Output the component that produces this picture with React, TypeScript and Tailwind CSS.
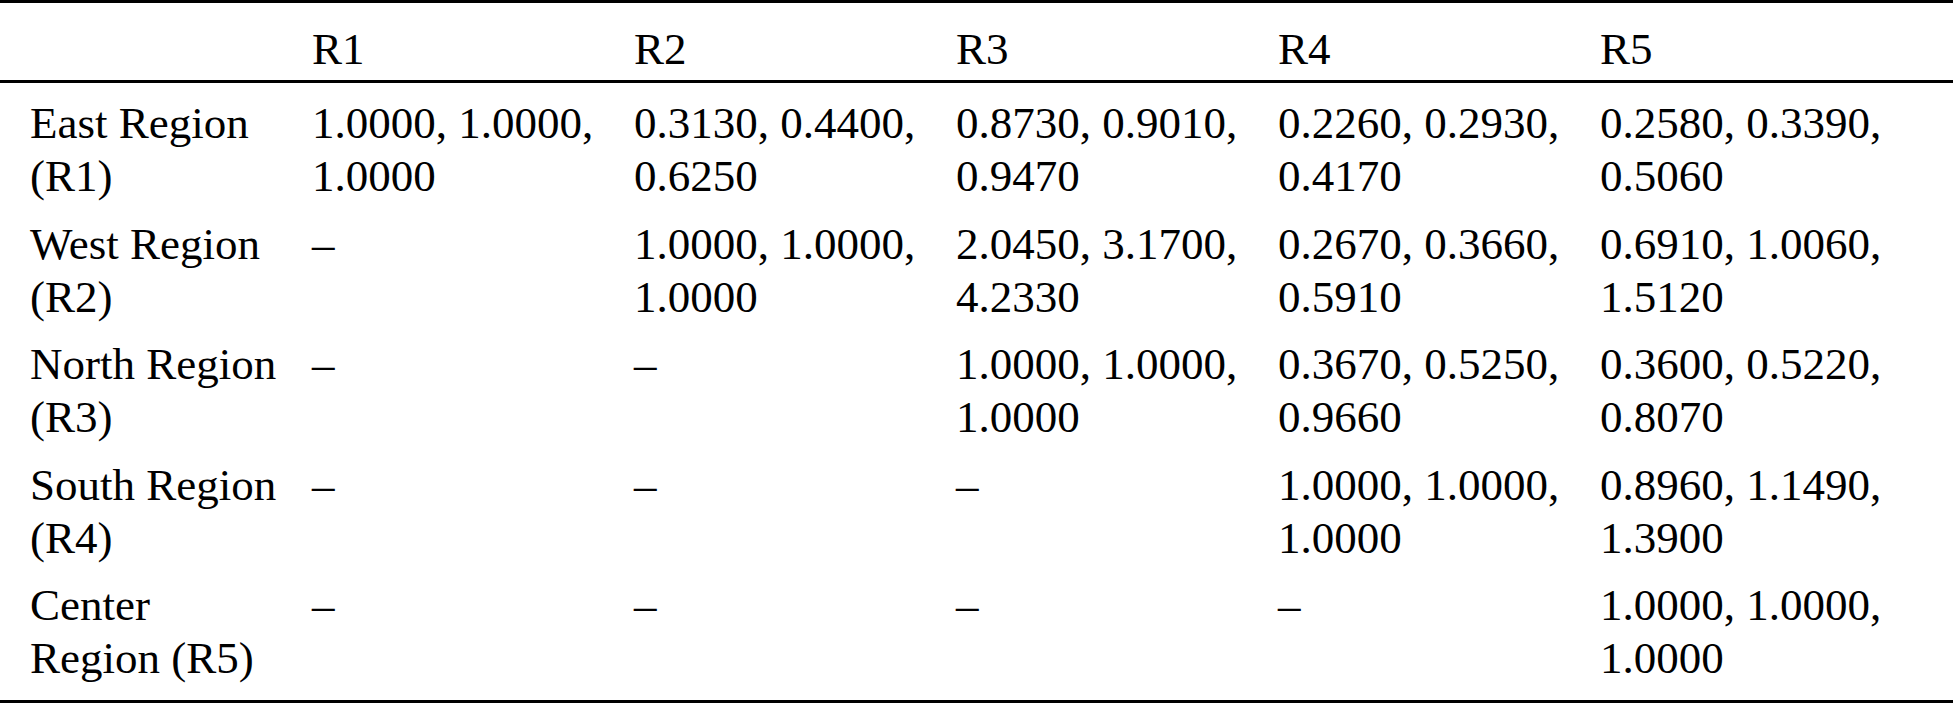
const header = ['R1', 'R2', 'R3', 'R4', 'R5'];

const rows: { label: string; cells: string[] }[] = [
  {
    label: 'East Region (R1)',
    cells: ['1.0000, 1.0000, 1.0000', '0.3130, 0.4400, 0.6250', '0.8730, 0.9010, 0.9470', '0.2260, 0.2930, 0.4170', '0.2580, 0.3390, 0.5060'],
  },
  {
    label: 'West Region (R2)',
    cells: ['–', '1.0000, 1.0000, 1.0000', '2.0450, 3.1700, 4.2330', '0.2670, 0.3660, 0.5910', '0.6910, 1.0060, 1.5120'],
  },
  {
    label: 'North Region (R3)',
    cells: ['–', '–', '1.0000, 1.0000, 1.0000', '0.3670, 0.5250, 0.9660', '0.3600, 0.5220, 0.8070'],
  },
  {
    label: 'South Region (R4)',
    cells: ['–', '–', '–', '1.0000, 1.0000, 1.0000', '0.8960, 1.1490, 1.3900'],
  },
  {
    label: 'Center Region (R5)',
    cells: ['–', '–', '–', '–', '1.0000, 1.0000, 1.0000'],
  },
];

export default function App() {
  return (
    <main className="w-[1953px] h-[703px] bg-white text-black font-['Liberation_Serif','Times_New_Roman',serif] text-[45px] leading-[53px]">
      <div className="border-t-[3px] border-b-[3px] border-black pt-[20px] pb-[4px]">
        <div className="grid grid-cols-[282px_repeat(5,322px)] pl-[30px]">
          <div></div>
          {header.map(h => (
            <div key={h} className="pr-[22px]">{h}</div>
          ))}
        </div>
      </div>

      <div className="border-b-[3px] border-black pt-[7px] pb-[7.5px]">
        {rows.map(row => (
          <div key={row.label} className="grid grid-cols-[282px_repeat(5,322px)] pl-[30px] py-[7.25px]">
            <div className="pr-[26px]">{row.label}</div>
            {row.cells.map((c, i) => (
              <div key={i} className="pr-[22px]">{c}</div>
            ))}
          </div>
        ))}
      </div>
    </main>
  );
}
